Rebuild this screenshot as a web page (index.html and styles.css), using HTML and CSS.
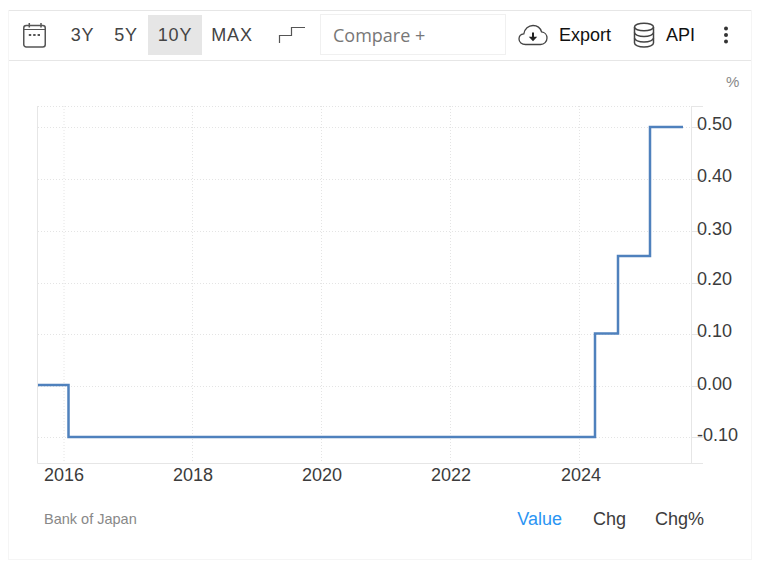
FILE: index.html
```html
<!DOCTYPE html>
<html lang="en">
<head>
<meta charset="utf-8">
<title>Japan Interest Rate</title>
<link rel="stylesheet" href="styles.css">
</head>
<body>
<main class="widget">
  <header class="toolbar">
    <button class="icon-btn calendar" aria-label="Calendar">
      <svg width="26" height="26" viewBox="0 0 26 26" fill="none" stroke="#555" stroke-width="1.5">
        <rect x="1.75" y="3.5" width="21.5" height="21.5" rx="2.5"/>
        <path d="M1.75 7.5h21.5" stroke-width="1"/>
        <path d="M7.3 1v4.5M19 1v4.5"/>
        <path d="M6.8 13h2.400M11.200 13h2.400M15.600 13h2.400" stroke-width="2.200"/>
      </svg>
    </button>
    <nav class="ranges">
      <button class="range r3">3Y</button>
      <button class="range r5">5Y</button>
      <button class="range r10 active">10Y</button>
      <button class="range rmax">MAX</button>
    </nav>
    <button class="icon-btn step" aria-label="Chart type">
      <svg width="28" height="18" viewBox="0 0 28 18" fill="none" stroke="#555" stroke-width="1.200">
        <path d="M1.500 17V9.500H13.500V1.500H27"/>
      </svg>
    </button>
    <div class="compare">Compare +</div>
    <button class="action export">
      <svg width="30" height="22" viewBox="0 0 30 22" fill="none">
        <path d="M7.500 20.500C3.800 20.500 1 18.200 1 15c0-2.800 2-4.900 4.800-5.200C6.600 5 10.500 1.500 15 1.500c4 0 7.400 2.600 8.500 6.300 3.200.3 5.500 3 5.500 6.200 0 3.700-2.800 6.500-6.500 6.500z" stroke="#444" stroke-width="1.300"/>
        <path d="M15 8.500v6" stroke="#222" stroke-width="2"/>
        <path d="M10.800 12.800h8.400L15 17.300z" fill="#222"/>
      </svg>
      <span>Export</span>
    </button>
    <button class="action api">
      <svg width="22" height="26" viewBox="0 0 22 26" fill="none" stroke="#444" stroke-width="1.500">
        <ellipse cx="11" cy="5" rx="9.500" ry="3.800"/>
        <path d="M1.500 5v16c0 2.200 4.300 4 9.500 4s9.500-1.800 9.500-4V5"/>
        <path d="M1.500 10.500c0 2.200 4.300 4 9.500 4s9.500-1.800 9.500-4M1.500 16c0 2.200 4.300 4 9.500 4s9.500-1.800 9.500-4"/>
      </svg>
      <span>API</span>
    </button>
    <button class="icon-btn more" aria-label="More">
      <svg width="6" height="18" viewBox="0 0 6 18" fill="#333">
        <circle cx="3" cy="2.500" r="2"/><circle cx="3" cy="9" r="2"/><circle cx="3" cy="15.500" r="2"/>
      </svg>
    </button>
  </header>

  <svg class="chart" width="743" height="430" viewBox="9 61 743 430" role="img" aria-label="Interest rate chart">
    <g class="grid">
      <path d="M38 106.500H692M38 127.500H692M38 179.500H692M38 231.500H692M38 283.500H692M38 334.500H692M38 386.500H692M38 437.500H692"/>
      <path d="M64 106V463M192.500 106V463M321.500 106V463M450.500 106V463M579.500 106V463"/>
    </g>
    <path class="axis" d="M37.500 106V463.500H703M691.500 106V463.500M691.500 106.500H703M691.500 127.500H703"/>
    <path class="ticks" d="M692 179.500H703M692 231.500H703M692 283.500H703M692 334.500H703M692 386.500H703M692 437.500H703"/>
    <path class="line" d="M38 385H68.500V437H595V333.500H618V256H650V127H683"/>
    <text class="unit" x="726" y="87">%</text>
    <g class="labels">
      <text x="697" y="130">0.50</text>
      <text x="697" y="182">0.40</text>
      <text x="697" y="235">0.30</text>
      <text x="697" y="285">0.20</text>
      <text x="697" y="337">0.10</text>
      <text x="697" y="390">0.00</text>
      <text x="697" y="441">-0.10</text>
      <text x="44" y="481">2016</text>
      <text x="173" y="481">2018</text>
      <text x="302" y="481">2020</text>
      <text x="431" y="481">2022</text>
      <text x="561" y="481">2024</text>
    </g>
  </svg>

  <footer class="footer">
    <span class="source">Bank of Japan</span>
    <div class="legend">
      <span class="legend-item selected">Value</span>
      <span class="legend-item">Chg</span>
      <span class="legend-item">Chg%</span>
    </div>
  </footer>
</main>
</body>
</html>
```

FILE: styles.css
```css
* { box-sizing: border-box; }

html, body { margin: 0; background: #fff; }

body {
  font-family: "Liberation Sans", Arial, sans-serif;
  color: #333;
}

button {
  font: inherit;
  color: inherit;
  background: none;
  border: 0;
  padding: 0;
  display: flex;
  align-items: center;
}

.widget {
  width: 744px;
  height: 550px;
  margin: 10px 0 0 8px;
  border: 1px solid #f5f5f5;
  border-top: 0;
  overflow: hidden;
}

.toolbar {
  height: 51px;
  padding-bottom: 1px;
  display: flex;
  align-items: center;
  border: 1px solid #e6e6e6;
  margin-left: -1px;
  margin-right: -1px;
  font-size: 18px;
}

.icon-btn { justify-content: center; }

.calendar { width: 26px; margin-left: 13px; }

.ranges { display: flex; margin-left: 18px; height: 40px; }

.range {
  height: 40px;
  justify-content: center;
  letter-spacing: 0.8px;
  color: #444;
}

.r3 { width: 54px; margin-left: -11px; padding-left: 1px; }
.r5 { width: 40px; margin-left: -3px; }
.r10 { width: 54px; margin-left: 2px; }
.rmax { width: 62px; margin-left: -1px; }
.active { background: #e6e6e6; }

.step { width: 28px; margin-left: 15px; }

.compare {
  width: 186px;
  height: 41px;
  margin: 0 0 1px 14px;
  padding: 1px 0 0 12px;
  display: flex;
  align-items: center;
  border: 1px solid #f0f0f0;
  font-family: "Open Sans", sans-serif;
  font-size: 18px;
  color: #777;
}

.action { gap: 11px; color: #111; }
.export { margin-left: 12px; }
.api { margin-left: 22px; }
.more { width: 6px; margin-left: 28px; }

.chart { display: block; }

.grid path {
  fill: none;
  stroke: #e4e4e4;
  stroke-width: 1;
  stroke-dasharray: 1 2;
}

.axis, .ticks {
  fill: none;
  stroke: #e6e6e6;
  stroke-width: 1;
}

.line {
  fill: none;
  stroke: #4f81bd;
  stroke-width: 2.500;
}

.labels text {
  font-size: 18px;
  fill: #3c3c3c;
}

.unit {
  font-size: 15px;
  fill: #888;
}

.footer {
  display: flex;
  justify-content: space-between;
  align-items: center;
  padding: 17px 47px 0 35px;
}

.source { font-size: 14.500px; color: #888; }

.legend { display: flex; gap: 31px; padding-top: 1px; font-size: 18px; }

.legend-item { color: #3c3c3c; }
.selected { color: #2b95f3; }
.legend-item:last-child { margin-left: -2px; }
```
